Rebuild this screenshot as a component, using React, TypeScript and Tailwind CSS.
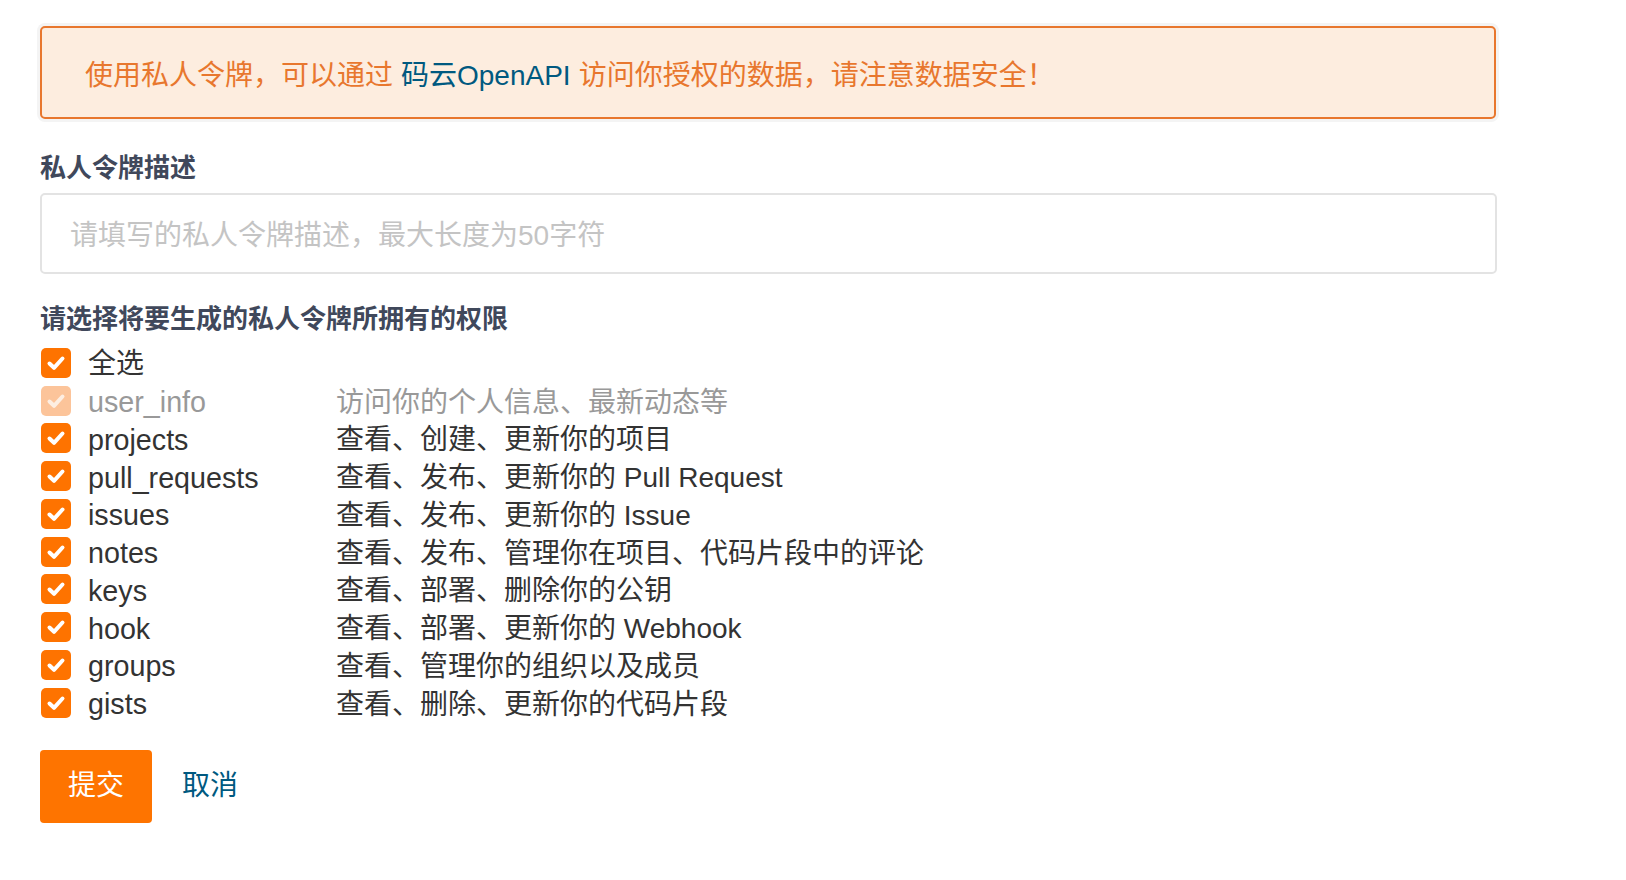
import React from 'react'

const font = 'font-["Liberation_Sans","Noto_Sans_CJK_SC",sans-serif]'

type Scope = { name: string; desc: string; disabled?: boolean }

const scopes: Scope[] = [
  { name: 'user_info', desc: '访问你的个人信息、最新动态等', disabled: true },
  { name: 'projects', desc: '查看、创建、更新你的项目' },
  { name: 'pull_requests', desc: '查看、发布、更新你的 Pull Request' },
  { name: 'issues', desc: '查看、发布、更新你的 Issue' },
  { name: 'notes', desc: '查看、发布、管理你在项目、代码片段中的评论' },
  { name: 'keys', desc: '查看、部署、删除你的公钥' },
  { name: 'hook', desc: '查看、部署、更新你的 Webhook' },
  { name: 'groups', desc: '查看、管理你的组织以及成员' },
  { name: 'gists', desc: '查看、删除、更新你的代码片段' },
]

function Check({ disabled }: { disabled?: boolean }) {
  return (
    <span
      className={`ml-[1px] flex h-[30px] w-[30px] shrink-0 items-center justify-center rounded-[5px] ${
        disabled ? 'bg-[#fcc49a]' : 'bg-[#fe7300]'
      }`}
    >
      <svg width="30" height="30" viewBox="0 0 30 30">
        <path
          d="M8.5 15.5 L13 19.8 L21.5 10.5"
          fill="none"
          stroke={disabled ? '#fdeee2' : '#ffffff'}
          strokeWidth="4"
          strokeLinecap="round"
          strokeLinejoin="round"
        />
      </svg>
    </span>
  )
}

export default function App() {
  return (
    <div className={`min-h-screen bg-white pl-[40px] pt-[26px] ${font}`}>
      <div className="flex h-[93px] w-[1456px] items-center rounded-[5px] border-2 border-[#e8772e] bg-[#fdeddf] pl-[43px] pt-[6px] text-[28px] text-[#e8772e] shadow-[0_0_0_3px_#f4f4f4]">
        使用私人令牌，可以通过 <span className="mx-[8px] text-[#005980]">码云OpenAPI</span> 访问你授权的数据，请注意数据安全！
      </div>

      <div className="mt-[30px] pt-[1px] text-[26px] font-bold leading-[36px] text-[#40485b]">私人令牌描述</div>
      <input
        type="text"
        placeholder="请填写的私人令牌描述，最大长度为50字符"
        className="mt-[7px] h-[81px] w-[1457px] rounded-[5px] border-2 border-[#e3e3e3] bg-white pl-[28px] pt-[4px] text-[28px] text-[#333] outline-none placeholder:text-[#c4c4c4]"
      />

      <div className="mt-[27px] text-[26px] font-bold leading-[36px] text-[#40485b]">
        请选择将要生成的私人令牌所拥有的权限
      </div>

      <div className="mt-[7px] flex flex-col">
        <div className="flex h-[37.75px] items-center">
          <Check />
          <span className="ml-[17px] pt-[3px] text-[28px] text-[#333]">全选</span>
        </div>
        {scopes.map((s) => (
          <div key={s.name} className="flex h-[37.75px] items-center">
            <Check disabled={s.disabled} />
            <span
              className={`ml-[17px] w-[248px] pt-[4px] text-[28.7px] ${s.disabled ? 'text-[#999]' : 'text-[#333]'}`}
            >
              {s.name}
            </span>
            <span className={`pt-[4px] text-[28px] ${s.disabled ? 'text-[#999]' : 'text-[#333]'}`}>{s.desc}</span>
          </div>
        ))}
      </div>

      <div className="mt-[28px] flex items-center">
        <button className="h-[73px] w-[112px] rounded-[4px] bg-[#fe7400] text-[28px] text-white">提交</button>
        <a className="ml-[30px] text-[28px] text-[#005980]">取消</a>
      </div>
    </div>
  )
}
